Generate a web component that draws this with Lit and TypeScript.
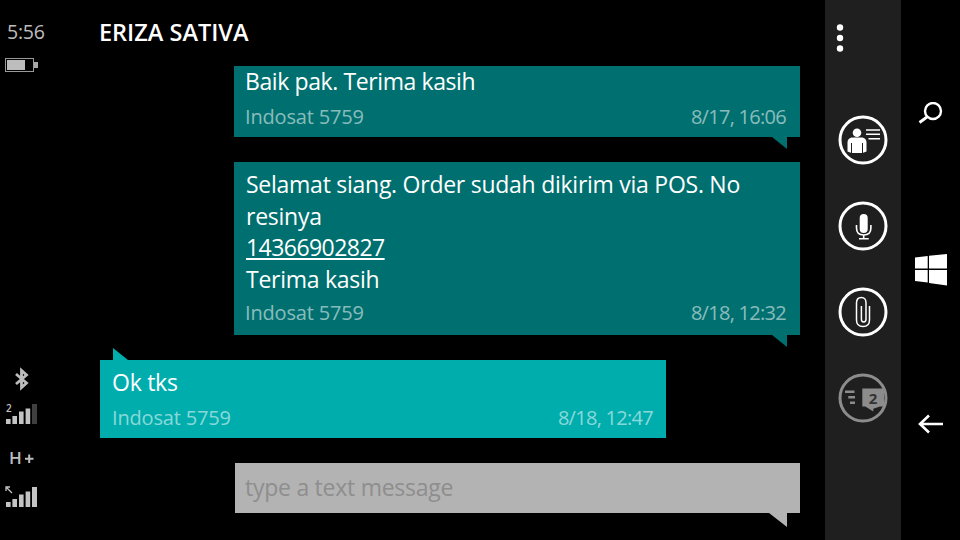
import { LitElement, html, css, svg } from "lit";
import { customElement } from "lit/decorators.js";

const bars = (color5: string) => svg`
  <rect x="0" y="15" width="4.600" height="5" fill="#c4c4c4"/>
  <rect x="6.400" y="12" width="4.600" height="8" fill="#c4c4c4"/>
  <rect x="13" y="7.500" width="4.600" height="12.500" fill="#c4c4c4"/>
  <rect x="19.600" y="4.500" width="4.600" height="15.500" fill="#c4c4c4"/>
  <rect x="26" y="0" width="5" height="20" fill="${color5}"/>`;

@customElement("app-root")
export class AppRoot extends LitElement {
  static styles = css`
    :host {
      display: block;
      width: 960px;
      height: 540px;
      background: #000;
      overflow: hidden;
      font-family: "Open Sans", "Noto Sans", sans-serif;
      color: #fff;
    }
    .screen { display: flex; height: 540px; }
    .status {
      width: 100px;
      flex: none;
      display: flex;
      flex-direction: column;
      align-items: flex-start;
      color: #bdbdbd;
    }
    .time {
      font-size: 19.500px;
      line-height: 24px;
      margin: 20px 0 0 7px;
      letter-spacing: -0.2px;
    }
    .battery { display: block; margin: 14px 0 0 5px; }
    .signals { display: block; margin: 293px 0 0 5px; }
    .chat {
      width: 725px;
      flex: none;
      display: flex;
      flex-direction: column;
      padding-right: 25px;
      box-sizing: border-box;
    }
    .title {
      height: 66px;
      flex: none;
      font-size: 23.500px;
      font-weight: 600;
      line-height: 64px;
      margin-left: -1px;
    }
    .list { display: flex; flex-direction: column; gap: 25px; align-items: flex-end; flex: 1; }
    .bubble { position: relative; box-sizing: border-box; width: 566px; padding: 0 14px 0 11px; }
    .out { background: #006f6f; }
    .in { background: #00adad; align-self: flex-start; padding-right: 13px; padding-left: 12px; }
    .tail-out::after {
      content: "";
      position: absolute;
      top: 100%;
      right: 13px;
      width: 15px;
      height: 12px;
      background: inherit;
      clip-path: polygon(0 0, 100% 0, 100% 100%);
    }
    .tail-in::before {
      content: "";
      position: absolute;
      bottom: 100%;
      left: 13px;
      width: 15px;
      height: 12px;
      background: inherit;
      clip-path: polygon(0 0, 100% 100%, 0 100%);
    }
    .body { font-size: 23px; line-height: 31.500px; letter-spacing: -0.26px; }
    .body a { color: #fff; text-decoration: underline; letter-spacing: -0.55px; }
    .meta {
      display: flex;
      justify-content: space-between;
      font-size: 20px;
      line-height: 28px;
      color: rgba(255, 255, 255, 0.55);
      letter-spacing: -0.17px;
    }
    .date { letter-spacing: -0.72px; }
    .b1 { height: 71px; }
    .b1 .body { letter-spacing: -0.4px; }
    .b2 { height: 173px; padding-top: 7px; padding-left: 12px; }
    .b3 { height: 78px; padding-top: 7px; }
    .b1 .meta { margin-top: 5px; }
    .b2 .meta { margin-top: 4px; margin-left: -1px; }
    .b3 .meta { margin-top: 5px; }
    .field {
      position: relative;
      width: 565px;
      height: 50px;
      box-sizing: border-box;
      background: #b3b3b3;
      color: #8e8e8e;
      font-size: 23px;
      line-height: 48px;
      padding-left: 10px;
      letter-spacing: -0.26px;
    }
    .field::after {
      content: "";
      position: absolute;
      top: 100%;
      right: 13px;
      width: 18px;
      height: 14px;
      background: #b3b3b3;
      clip-path: polygon(0 0, 100% 0, 100% 100%);
    }
    .bar {
      width: 76px;
      flex: none;
      background: #1f1f1f;
      display: flex;
      flex-direction: column;
      align-items: center;
    }
    .dots-wrap { height: 115px; width: 76px; display: flex; }
    .dots-wrap svg { margin: 23px 0 0 8px; }
    .acts { display: flex; flex-direction: column; gap: 36px; }
    .acts svg { display: block; }
    .nav {
      flex: 1;
      display: flex;
      flex-direction: column;
      align-items: center;
    }
    .nav svg { display: block; }
    .n1 { margin-top: 102px; }
    .n2 { margin-top: 130px; }
    .n3 { margin-top: 128px; }
  `;

  render() {
    return html`
      <div class="screen">
        <div class="status">
          <div class="time">5:56</div>
          <svg class="battery" width="34" height="14" viewBox="0 0 34 14">
            <rect x="0.500" y="0.500" width="28" height="13" fill="none" stroke="#9a9a9a"/>
            <rect x="2" y="2" width="18" height="10" fill="#bdbdbd"/>
            <rect x="29" y="4" width="4" height="6" fill="#a8a8a8"/>
          </svg>
          <svg class="signals" width="36" height="145" viewBox="0 0 36 145">
            <path d="M11 9 21.500 18 16.500 22.500V5.500L21.500 10 11 19" fill="none" stroke="#bdbdbd" stroke-width="2.800"/>
            <text x="1" y="47" font-size="10" font-weight="600" fill="#c4c4c4">2</text>
            <g transform="translate(1 39)">${bars("#3f3f3f")}</g>
            <text x="4" y="99" font-size="17" font-weight="600" fill="#bdbdbd">H</text>
            <path d="M20 93.700h8.500M24.200 89.500v8.500" stroke="#bdbdbd" stroke-width="2" fill="none"/>
            <path d="M1.500 122.500l5.500 5.500M1 126v-4h4" stroke="#c4c4c4" stroke-width="1.300" fill="none"/>
            <g transform="translate(1 122)">${bars("#c4c4c4")}</g>
          </svg>
        </div>
        <div class="chat">
          <div class="title">ERIZA SATIVA</div>
          <div class="list">
            <div class="bubble out tail-out b1">
              <div class="body">Baik pak. Terima kasih</div>
              <div class="meta"><span>Indosat 5759</span><span class="date">8/17, 16:06</span></div>
            </div>
            <div class="bubble out tail-out b2">
              <div class="body">Selamat siang. Order sudah dikirim via POS. No<br>resinya<br><a>14366902827</a><br>Terima kasih</div>
              <div class="meta"><span>Indosat 5759</span><span class="date">8/18, 12:32</span></div>
            </div>
            <div class="bubble in tail-in b3">
              <div class="body">Ok tks</div>
              <div class="meta"><span>Indosat 5759</span><span class="date">8/18, 12:47</span></div>
            </div>
            <div class="field">type a text message</div>
          </div>
        </div>
        <div class="bar">
          <div class="dots-wrap">
            <svg width="12" height="30" viewBox="0 0 12 30" fill="#fff">
              <circle cx="7" cy="4.500" r="3.200"/><circle cx="7" cy="15" r="3.200"/><circle cx="7" cy="25.500" r="3.200"/>
            </svg>
          </div>
          <div class="acts">
            <svg width="50" height="50" viewBox="0 0 50 50">
              <circle cx="25" cy="25" r="23" fill="none" stroke="#fff" stroke-width="3"/>
              <circle cx="19" cy="17.700" r="4.300" fill="#fff"/>
              <path d="M9.500 36.500V27.500q0-4 4-5h11q4 1 4 5v9l-4 1.500h-11z" fill="#fff"/>
              <path d="M13.500 28V38.500M24.500 28V38.500" stroke="#1f1f1f" stroke-width="1"/>
              <path d="M28 15h14M28 19.300h14M30.500 23.700h11.500" stroke="#fff" stroke-width="1.500"/>
            </svg>
            <svg width="50" height="50" viewBox="0 0 50 50">
              <circle cx="25" cy="25" r="23" fill="none" stroke="#fff" stroke-width="3"/>
              <rect x="21.700" y="13" width="8" height="19" rx="4" fill="#fff"/>
              <path d="M18.500 24v3q0 7 7.200 7t7.200-7v-3M25.700 34v3.500M21 37.800h9.700" fill="none" stroke="#fff" stroke-width="1.600"/>
            </svg>
            <svg width="50" height="50" viewBox="0 0 50 50">
              <circle cx="25" cy="25" r="23" fill="none" stroke="#fff" stroke-width="3"/>
              <path d="M31.500 19V33q0 6.500-6.500 6.500T18.500 33V16q0-5.500 4.800-5.500T28 16V32q0 3-2.300 3t-2.300-3V19" fill="none" stroke="#fff" stroke-width="1.500"/>
            </svg>
            <svg width="50" height="50" viewBox="0 0 50 50">
              <circle cx="25" cy="25" r="23" fill="none" stroke="#8c8c8c" stroke-width="3"/>
              <path d="M7 18.700h9.500M10.300 24.300H17M12 29.700h5" stroke="#8c8c8c" stroke-width="2.400"/>
              <path d="M24.300 15.500H46V33.500h-4l-6.700 2.200V38.500L27.300 33.500h-3z" fill="#8c8c8c"/>
              <text x="35" y="30.500" font-size="15" font-weight="700" fill="#333" text-anchor="middle">2</text>
            </svg>
          </div>
        </div>
        <div class="nav">
          <svg class="n1" width="26" height="22" viewBox="0 0 26 22">
            <circle cx="15" cy="9" r="8" fill="none" stroke="#fff" stroke-width="2.400"/>
            <path d="M9 15 1.500 20.500" stroke="#fff" stroke-width="2.800"/>
          </svg>
          <svg class="n2" width="32" height="32" viewBox="0 0 32 32" fill="#fff">
            <path d="M0 3.500 12.700 2V14.500H0zM14 1.800 32 0V14.500H14zM0 16H12.700V28.500L0 27zM14 16H32V31.500L14 29z"/>
          </svg>
          <svg class="n3" width="26" height="20" viewBox="0 0 26 20">
            <path d="M25 10H2M11 1.500 2 10l9 8.500" fill="none" stroke="#fff" stroke-width="2.600"/>
          </svg>
        </div>
      </div>
    `;
  }
}
